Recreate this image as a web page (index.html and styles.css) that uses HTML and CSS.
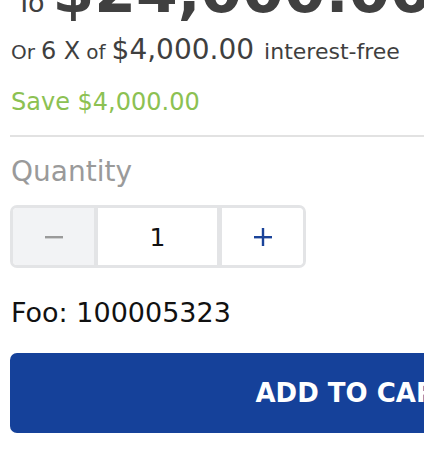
FILE: index.html
```html
<!DOCTYPE html>
<html>
<head>
<meta charset="utf-8">
<link rel="stylesheet" href="styles.css">
</head>
<body>
<div class="product">
  <div class="price"><span class="price-to">To</span><span class="price-amount">$24,000.00</span></div>
  <div class="installment"><span class="inst-small">Or</span><span class="inst-mid">6 X</span><span class="inst-small">of</span><span class="inst-amount">$4,000.00</span><span class="inst-tail">interest-free</span></div>
  <div class="save">Save $4,000.00</div>
  <hr class="divider">
  <div class="qty-label">Quantity</div>
  <div class="qty">
    <button class="qty-btn qty-minus" aria-label="Decrease"><svg width="18" height="18" viewBox="0 0 18 18"><rect x="0" y="8" width="18" height="2.4" fill="#9a9a9a"/></svg></button>
    <div class="qty-value">1</div>
    <button class="qty-btn qty-plus" aria-label="Increase"><svg width="18" height="18" viewBox="0 0 18 18"><rect x="0" y="8" width="18" height="2.4" fill="#1a4399"/><rect x="7.8" y="0" width="2.4" height="18" fill="#1a4399"/></svg></button>
  </div>
  <div class="sku">Foo: 100005323</div>
  <button class="add-to-cart">ADD TO CART</button>
</div>
</body>
</html>
```
FILE: styles.css
```css
html, body {
  margin: 0;
  padding: 0;
  overflow: hidden;
  background: #fff;
}
body {
  font-family: "DejaVu Sans", sans-serif;
  color: #3f3f3f;
}
.product {
  width: 688px;
  padding: 0 0 0 10px;
}
.price {
  margin-top: -39px;
  display: flex;
  align-items: baseline;
  gap: 8px;
  white-space: nowrap;
  color: #404040;
}
.price-to {
  font-size: 27px;
  line-height: 1;
  margin-left: 6px;
}
.price-amount {
  font-size: 60px;
  line-height: 60px;
  font-weight: bold;
}
.installment {
  margin-top: 15px;
  display: flex;
  align-items: baseline;
  gap: 6px;
  white-space: nowrap;
  color: #3f3f3f;
  padding-left: 1px;
}
.installment span { line-height: 1; }
.inst-small { font-size: 20px; }
.inst-mid { font-size: 24px; }
.inst-amount { font-size: 28px; }
.inst-tail { font-size: 22px; margin-left: 4px; }
.save {
  margin-top: 26px;
  font-size: 24px;
  line-height: 24px;
  color: #8cc152;
  padding-left: 1px;
}
.divider {
  margin: 21px 0 0 0;
  border: 0;
  height: 2px;
  background: #e2e2e2;
}
.qty-label {
  margin-top: 21px;
  font-size: 28px;
  line-height: 28px;
  color: #9a9a9a;
  padding-left: 1px;
}
.qty {
  margin-top: 19px;
  display: flex;
  width: 290px;
  height: 57px;
  border: 3px solid #e3e4e6;
  border-radius: 7px;
  overflow: hidden;
}
.qty-btn {
  width: 81px;
  flex: none;
  border: 0;
  padding: 0;
  margin: 0;
  background: #fff;
  display: flex;
  align-items: center;
  justify-content: center;
}
.qty-minus {
  background: #f2f3f5;
}
.qty-value {
  width: 128px;
  flex: none;
  box-sizing: border-box;
  border-left: 4px solid #e3e4e6;
  border-right: 5px solid #e3e4e6;
  display: flex;
  align-items: center;
  justify-content: center;
  padding-top: 2px;
  font-size: 25px;
  color: #111;
}
.sku {
  margin-top: 31px;
  font-size: 27px;
  line-height: 27px;
  color: #111;
  padding-left: 1px;
}
.add-to-cart {
  margin-top: 27px;
  display: block;
  width: 688px;
  height: 80px;
  border: 0;
  border-radius: 7px;
  background: #15419a;
  color: #fff;
  font-family: "DejaVu Sans", sans-serif;
  font-weight: bold;
  font-size: 26px;
  padding: 0;
}
```
